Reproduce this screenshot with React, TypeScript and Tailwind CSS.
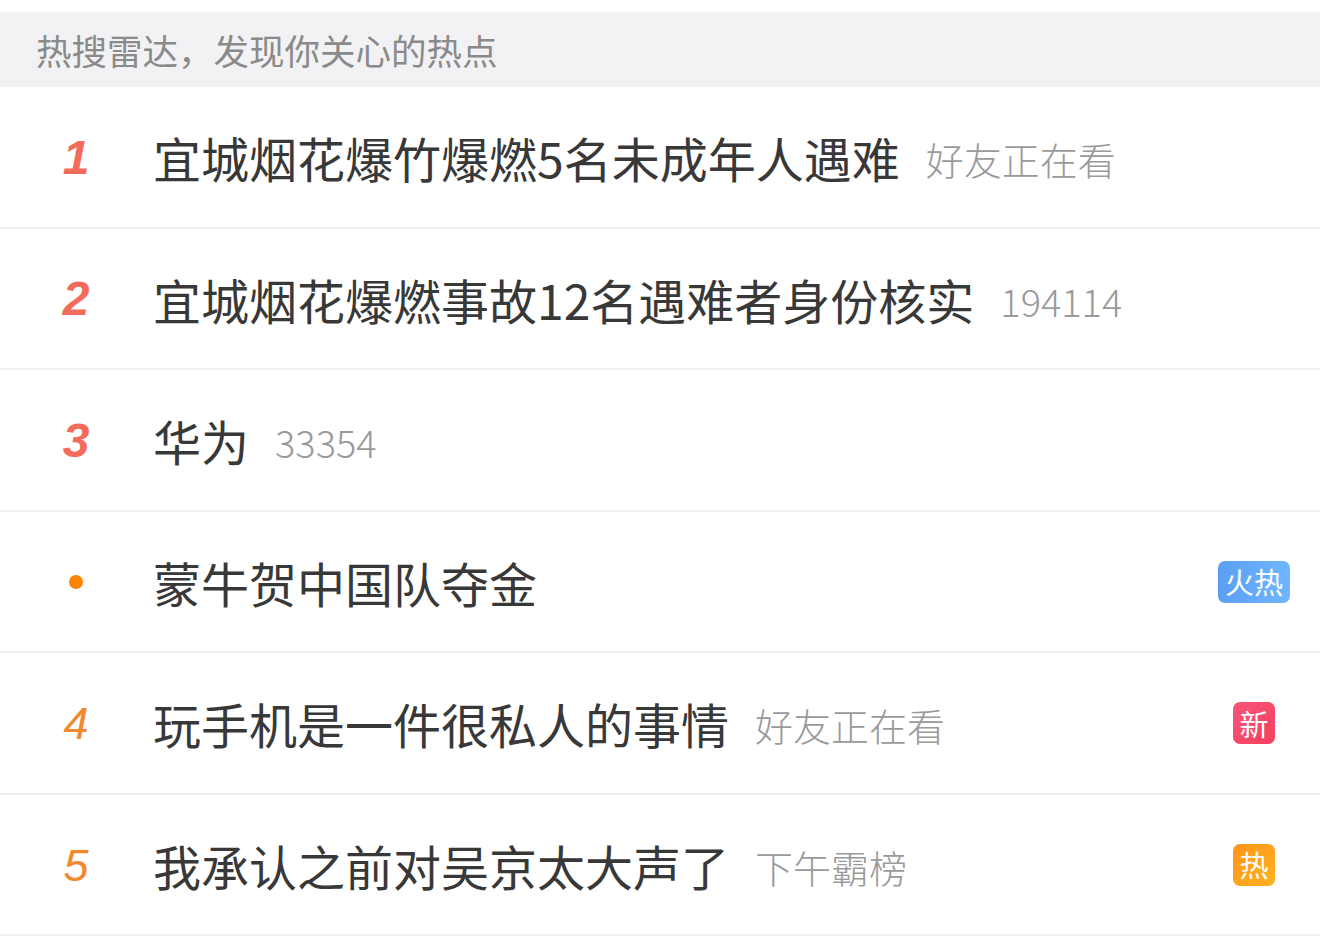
const rows = [
  { rank: "1", title: "宜城烟花爆竹爆燃5名未成年人遇难", extra: "好友正在看", tag: null },
  { rank: "2", title: "宜城烟花爆燃事故12名遇难者身份核实", extra: "194114", tag: null },
  { rank: "3", title: "华为", extra: "33354", tag: null },
  { rank: "dot", title: "蒙牛贺中国队夺金", extra: "", tag: "火热" },
  { rank: "4", title: "玩手机是一件很私人的事情", extra: "好友正在看", tag: "新" },
  { rank: "5", title: "我承认之前对吴京太大声了", extra: "下午霸榜", tag: "热" },
]

const cjk = { fontFamily: '"Noto Sans CJK SC", "Noto Sans", sans-serif' }

function Rank({ rank }: { rank: string }) {
  if (rank === "dot") {
    return <span className="block w-[14px] h-[14px] rounded-full bg-[#ff8200]" />
  }
  const top = Number(rank) <= 3
  return (
    <span
      className={
        top
          ? "text-[48px] leading-none font-bold italic text-[#f26b5b]"
          : "text-[45px] leading-none italic text-[#f4862b]"
      }
      style={{ fontFamily: '"Liberation Sans", Arial, sans-serif' }}
    >
      {rank}
    </span>
  )
}

function Tag({ tag }: { tag: string | null }) {
  if (!tag) return null
  if (tag === "火热") {
    return (
      <span className="flex items-center justify-center w-[72px] h-[42px] rounded-[7px] bg-gradient-to-r from-[#5b9ff3] to-[#6fb6ff] text-white text-[29px] leading-none">
        {tag}
      </span>
    )
  }
  if (tag === "新") {
    return (
      <span className="flex items-center justify-center w-[42px] h-[42px] rounded-[7px] bg-gradient-to-br from-[#f8557a] to-[#f53e5e] text-white text-[29px] leading-none">
        {tag}
      </span>
    )
  }
  return (
    <span className="flex items-center justify-center w-[42px] h-[42px] rounded-[7px] bg-gradient-to-br from-[#ff9419] to-[#ffb21f] text-white text-[29px] leading-none">
      {tag}
    </span>
  )
}

export default function App() {
  return (
    <div className="w-[1320px] h-[942px] bg-white overflow-hidden pt-[12px]" style={cjk}>
      <div className="h-[75px] bg-[#f2f2f4] flex items-center pl-[36px]">
        <span className="text-[35.5px] leading-none text-[#8a8a8a]">热搜雷达，发现你关心的热点</span>
      </div>

      {rows.map((r, i) => (
        <div
          key={r.title}
          className={`flex items-center border-b-2 border-[#efefef] ${i % 2 === 0 ? "h-[142px]" : "h-[141px]"}`}
        >
          <div className="w-[152px] flex justify-center items-center shrink-0 pt-[1px]">
            <Rank rank={r.rank} />
          </div>
          <div className="flex-1 flex items-center min-w-0 pl-[1px]">
            <span className="text-[48px] leading-none text-[#383838] whitespace-nowrap">{r.title}</span>
            {r.extra && (
              <span className="ml-[26px] mt-[4px] text-[38px] leading-none text-[#9a9a9a] whitespace-nowrap font-light">
                {r.extra}
              </span>
            )}
          </div>
          <div className="w-[92px] mr-[20px] flex justify-center shrink-0">
            <Tag tag={r.tag} />
          </div>
        </div>
      ))}
    </div>
  )
}
